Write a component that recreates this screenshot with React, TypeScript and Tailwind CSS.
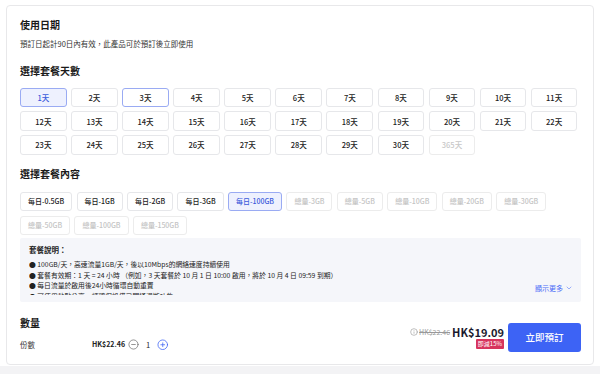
import { CircleMinus, CirclePlus, Info, ChevronDown } from "lucide-react";

const days = [...Array.from({ length: 30 }, (_, i) => i + 1), 365];

const packages = [
  { label: "每日-0.5GB" },
  { label: "每日-1GB" },
  { label: "每日-2GB" },
  { label: "每日-3GB" },
  { label: "每日-100GB", selected: true },
  { label: "總量-3GB", disabled: true },
  { label: "總量-5GB", disabled: true },
  { label: "總量-10GB", disabled: true },
  { label: "總量-20GB", disabled: true },
  { label: "總量-30GB", disabled: true },
  { label: "總量-50GB", disabled: true },
  { label: "總量-100GB", disabled: true },
  { label: "總量-150GB", disabled: true },
];

const notes = [
  "100GB/天，高速流量1GB/天，後以10Mbps的網絡速度持續使用",
  "套餐有效期：1 天 = 24 小時 （例如，3 天套餐於 10 月 1 日 10:00 啟用，將於 10 月 4 日 09:59 到期）",
  "每日流量於啟用後24小時循環自動重置",
  "可使用熱點分享，請確保設備已開通漫遊功能",
];

function dayClass(day: number) {
  if (day === 1) return "bg-[#eef1fe] border-[#9aabf3] text-[#3b5bdb]";
  if (day === 3) return "bg-white border-[#9aabf3] text-[#222]";
  if (day === 365) return "bg-white border-[#ececec] text-[#c8c8c8]";
  return "bg-white border-[#e6e7ea] text-[#222]";
}

export default function App() {
  return (
    <div className="w-[600px] h-[374px] bg-white font-['Noto_Sans_CJK_TC',sans-serif] overflow-hidden">
      <div className="pt-[5px] px-[6px]">
        <div className="border border-[#e8e8ea] rounded-[4px] pl-[13px] pr-[12px] pt-[12px] pb-[12px]">
          <h2 className="text-[10px] leading-[14px] font-semibold text-[#1a1a1a]">使用日期</h2>
          <p className="mt-[6px] text-[7.5px] leading-[11px] text-[#333]">
            預訂日起計90日內有效，此產品可於預訂後立即使用
          </p>

          <h2 className="mt-[15px] text-[10px] leading-[14px] font-semibold text-[#1a1a1a]">選擇套餐天數</h2>
          <div className="mt-[9.5px] grid grid-cols-[repeat(11,46.7px)] gap-x-[4.4px] gap-y-[4.3px]">
            {days.map((d) => (
              <div
                key={d}
                className={`h-[19.6px] flex items-center justify-center border rounded-[3px] text-[7.5px] font-medium ${dayClass(d)}`}
              >
                {d}天
              </div>
            ))}
          </div>

          <h2 className="mt-[12.3px] text-[10px] leading-[14px] font-semibold text-[#1a1a1a]">選擇套餐內容</h2>
          <div className="mt-[10.4px] flex flex-wrap gap-x-[4.4px] gap-y-[4.4px]">
            {packages.map((p) => (
              <div
                key={p.label}
                className={`h-[19.6px] px-[7px] flex items-center border rounded-[3px] text-[7px] font-medium ${
                  p.selected
                    ? "bg-[#eef1fe] border-[#9aabf3] text-[#3b5bdb]"
                    : p.disabled
                    ? "bg-white border-[#ececec] text-[#c4c4c4]"
                    : "bg-white border-[#e6e7ea] text-[#222]"
                }`}
              >
                {p.label}
              </div>
            ))}
          </div>

          <div className="relative mt-[3px] bg-[#f5f6fa] rounded-[2px] px-[9px] pt-[5px] pb-[7px]">
            <p className="text-[7.5px] leading-[14px] font-semibold text-[#222]">套餐說明：</p>
            <ul className="mt-[1.7px] h-[36px] overflow-hidden text-[6.8px] leading-[10.7px] text-[#222]">
              {notes.map((n) => (
                <li key={n} className="whitespace-nowrap">
                  ● {n}
                </li>
              ))}
            </ul>
            <button className="absolute right-[8px] bottom-[9px] flex items-center gap-[2px] text-[7px] leading-[10px] text-[#4a6cf7]">
              顯示更多
              <ChevronDown className="w-[8px] h-[8px]" strokeWidth={1.6} />
            </button>
          </div>

          <div className="mt-[14.5px] flex items-end justify-between">
            <div>
              <h2 className="text-[10px] leading-[14px] font-semibold text-[#1a1a1a]">數量</h2>
              <div className="mt-[6.7px] h-[15px] flex items-center text-[7.5px] text-[#333]">
                <span className="w-[72px]">份數</span>
                <span className="text-[7px] font-bold text-[#222]">HK$22.46</span>
                <CircleMinus className="ml-[3px] w-[11px] h-[11px] text-[#666]" strokeWidth={1.5} />
                <span className="mx-[7px] text-[7.5px] text-[#222]">1</span>
                <CirclePlus className="w-[11.5px] h-[11.5px] text-[#3d63f5]" strokeWidth={1.6} />
              </div>
            </div>

            <div className="flex items-center gap-[4px]">
              <div className="flex flex-col items-end">
                <div className="flex items-center h-[12px]">
                  <Info className="w-[8px] h-[8px] text-[#888]" strokeWidth={1.6} />
                  <span className="ml-[1px] text-[7px] text-[#999] line-through">HK$22.46</span>
                  <span className="ml-[2px] text-[11px] font-bold text-[#1a1a2e] leading-[12px]">HK$19.09</span>
                </div>
                <span className="mt-[1px] h-[10px] px-[2px] flex items-center bg-[#d7345d] rounded-[1px] text-[6px] text-white">
                  即減15%
                </span>
              </div>
              <button className="w-[73px] h-[29.5px] bg-[#3d63f5] rounded-[3px] text-white text-[9.5px] font-medium">
                立即預訂
              </button>
            </div>
          </div>
        </div>
      </div>
      <div className="mt-[1px] h-[10px] bg-[#f3f3f5]" />
    </div>
  );
}
